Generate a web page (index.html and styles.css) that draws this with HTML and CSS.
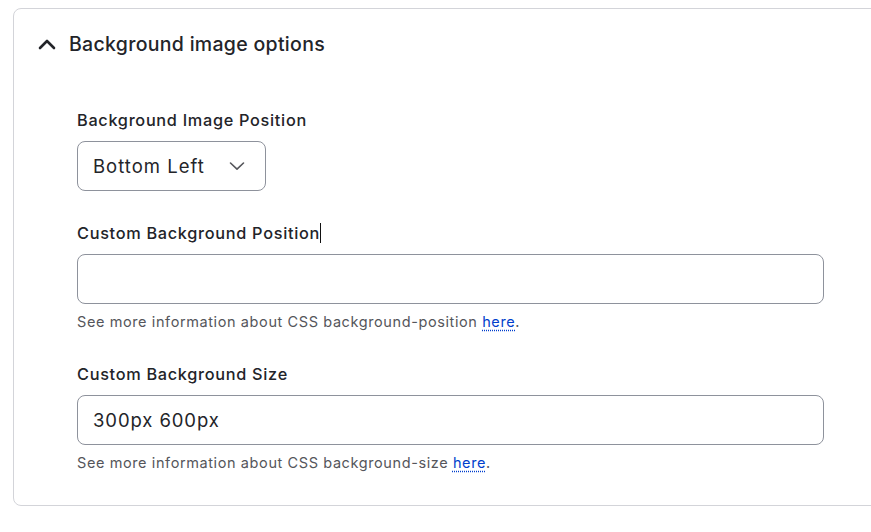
FILE: index.html
```html
<!DOCTYPE html>
<html lang="en">
<head>
<meta charset="utf-8">
<title>Background image options</title>
<link rel="stylesheet" href="styles.css">
</head>
<body>
<section class="card">
  <div class="card-head">
    <svg class="chev-up" width="18" height="12" viewBox="0 0 18 12" aria-hidden="true">
      <path d="M2 10 L9 3 L16 10" fill="none" stroke="#232429" stroke-width="2.6" stroke-linecap="round" stroke-linejoin="round"/>
    </svg>
    <span class="card-title">Background image options</span>
  </div>
  <div class="card-body">
    <div class="field">
      <label class="label">Background Image Position</label>
      <div class="select">
        <span>Bottom Left</span>
        <svg width="16" height="10" viewBox="0 0 16 10" aria-hidden="true">
          <path d="M1.5 2 L8 8.2 L14.5 2" fill="none" stroke="#55565b" stroke-width="1.6" stroke-linecap="round" stroke-linejoin="round"/>
        </svg>
      </div>
    </div>
    <div class="field">
      <label class="label">Custom Background Position<span class="caret"></span></label>
      <div class="input"></div>
      <p class="desc">See more information about CSS background-position <a href="#">here</a>.</p>
    </div>
    <div class="field">
      <label class="label">Custom Background Size</label>
      <div class="input"><span>300px 600px</span></div>
      <p class="desc">See more information about CSS background-size <a href="#">here</a>.</p>
    </div>
  </div>
</section>
</body>
</html>
```
FILE: styles.css
```css
html, body {
  margin: 0;
  padding: 0;
  background: #fff;
}

body {
  font-family: Inter, "Noto Sans", sans-serif;
  color: #232429;
  overflow: hidden;
}

.card {
  margin: 8px -12px 0 13px;
  border: 1px solid #d3d4d9;
  border-radius: 8px;
}

.card-head {
  display: flex;
  align-items: center;
  height: 70px;
  padding-left: 24px;
}

.chev-up {
  display: block;
  margin-right: 13px;
}

.card-title {
  font-size: 19.5px;
  font-weight: 500;
  line-height: 24px;
  letter-spacing: 0.3px;
  color: #232429;
}

.card-body {
  display: flex;
  flex-direction: column;
  gap: 32px;
  padding: 31px 0 33px 63px;
}

.card-body .field:last-child {
  margin-top: 1px;
}

.field {
  display: flex;
  flex-direction: column;
}

.label {
  font-size: 16.3px;
  font-weight: 500;
  line-height: 20px;
  letter-spacing: 0.7px;
  margin-bottom: 11px;
  color: #232429;
}

.caret {
  display: inline-block;
  width: 1px;
  height: 20px;
  background: #111;
  vertical-align: top;
}

.select {
  box-sizing: border-box;
  width: 189px;
  height: 50px;
  display: flex;
  align-items: center;
  justify-content: space-between;
  padding: 0 20px 0 15px;
  border: 1px solid #8e929c;
  border-radius: 8px;
  font-size: 18.5px;
  letter-spacing: 1px;
  color: #232429;
}

.input {
  box-sizing: border-box;
  width: 747px;
  height: 50px;
  display: flex;
  align-items: center;
  padding: 0 15px;
  border: 1px solid #8e929c;
  border-radius: 8px;
  font-size: 18.5px;
  letter-spacing: 0.9px;
  color: #232429;
}

.desc {
  margin: 9px 0 0;
  font-size: 14.5px;
  line-height: 18px;
  letter-spacing: 0.6px;
  color: #55565b;
}

.desc a {
  color: #003ecc;
  text-decoration: underline dotted;
  text-underline-offset: 3px;
}
```
